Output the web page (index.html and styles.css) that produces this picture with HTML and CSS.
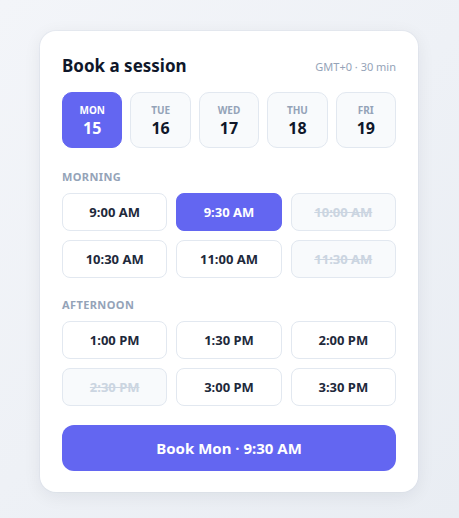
FILE: index.html
```html
<!DOCTYPE html>
<html lang="en">
<head>
    <meta charset="UTF-8">
    <meta name="viewport" content="width=device-width, initial-scale=1.0">
    <title>Book a session</title>
    <link rel="stylesheet" href="styles.css">
</head>
<body>
    <div class="card">
        <div class="header">
            <h1>Book a session</h1>
            <span class="meta">GMT+0 · 30 min</span>
        </div>

        <div class="days">
            <button class="day selected"><span class="dow">MON</span><span class="num">15</span></button>
            <button class="day"><span class="dow">TUE</span><span class="num">16</span></button>
            <button class="day"><span class="dow">WED</span><span class="num">17</span></button>
            <button class="day"><span class="dow">THU</span><span class="num">18</span></button>
            <button class="day"><span class="dow">FRI</span><span class="num">19</span></button>
        </div>

        <div class="section-label">MORNING</div>
        <div class="slots">
            <button class="slot">9:00 AM</button>
            <button class="slot selected">9:30 AM</button>
            <button class="slot taken" disabled>10:00 AM</button>
            <button class="slot">10:30 AM</button>
            <button class="slot">11:00 AM</button>
            <button class="slot taken" disabled>11:30 AM</button>
        </div>

        <div class="section-label">AFTERNOON</div>
        <div class="slots">
            <button class="slot">1:00 PM</button>
            <button class="slot">1:30 PM</button>
            <button class="slot">2:00 PM</button>
            <button class="slot taken" disabled>2:30 PM</button>
            <button class="slot">3:00 PM</button>
            <button class="slot">3:30 PM</button>
        </div>

        <button class="book">Book Mon · 9:30 AM</button>
    </div>
</body>
</html>
```

FILE: styles.css
```css
body {
    font-family: "Noto Sans", "Open Sans", sans-serif;
    background: linear-gradient(135deg, #f3f5f9 0%, #e9edf3 100%);
    margin: 0;
    min-height: 100vh;
    padding: 31px 0 0 40px;
    box-sizing: border-box;
}

.card {
    width: 378px;
    box-sizing: border-box;
    background-color: #fff;
    border-radius: 16px;
    padding: 22px 22px 21px;
    box-shadow: 0 4px 18px rgba(15, 23, 42, 0.07), 0 0 0 1px rgba(226, 232, 240, 0.6);
    display: flex;
    flex-direction: column;
}

.header {
    display: flex;
    justify-content: space-between;
    align-items: center;
    height: 24px;
    margin-bottom: 15px;
}

h1 {
    margin: 0;
    font-size: 17px;
    font-weight: 700;
    color: #0f172a;
}

.meta {
    font-size: 11px;
    color: #94a3b8;
    padding-top: 2px;
}

button {
    font-family: inherit;
    cursor: pointer;
}

.days {
    display: grid;
    grid-template-columns: repeat(5, 1fr);
    gap: 8px;
    margin-bottom: 21px;
}

.day {
    height: 56px;
    border: 1px solid #e2e8f0;
    background-color: #f8fafc;
    border-radius: 10px;
    display: flex;
    flex-direction: column;
    align-items: center;
    justify-content: center;
    gap: 1px;
    padding: 0;
}

.day .dow {
    font-size: 10px;
    font-weight: 700;
    color: #94a3b8;
    line-height: 14px;
}

.day .num {
    font-size: 16px;
    font-weight: 700;
    color: #0f172a;
    line-height: 20px;
}

.day.selected {
    background-color: #6366f1;
    border-color: #6366f1;
}

.day.selected .dow,
.day.selected .num {
    color: #fff;
}

.section-label {
    font-size: 11px;
    font-weight: 700;
    letter-spacing: 0.4px;
    color: #94a3b8;
    line-height: 15px;
    margin-bottom: 9px;
}

.slots {
    display: grid;
    grid-template-columns: repeat(3, 1fr);
    gap: 9px;
    margin-bottom: 19px;
}

.slot {
    height: 38px;
    border: 1px solid #e2e8f0;
    background-color: #fff;
    border-radius: 8px;
    font-size: 13px;
    font-weight: 700;
    color: #1e293b;
    padding: 0;
}

.slot.selected {
    background-color: #6366f1;
    border-color: #6366f1;
    color: #fff;
}

.slot.taken {
    background-color: #f8fafc;
    color: #cbd5e1;
    text-decoration: line-through;
    cursor: default;
}

.book {
    height: 46px;
    border: none;
    border-radius: 12px;
    background-color: #6366f1;
    color: #fff;
    font-size: 15px;
    font-weight: 700;
}

.book:hover {
    background-color: #5457e5;
}
```
